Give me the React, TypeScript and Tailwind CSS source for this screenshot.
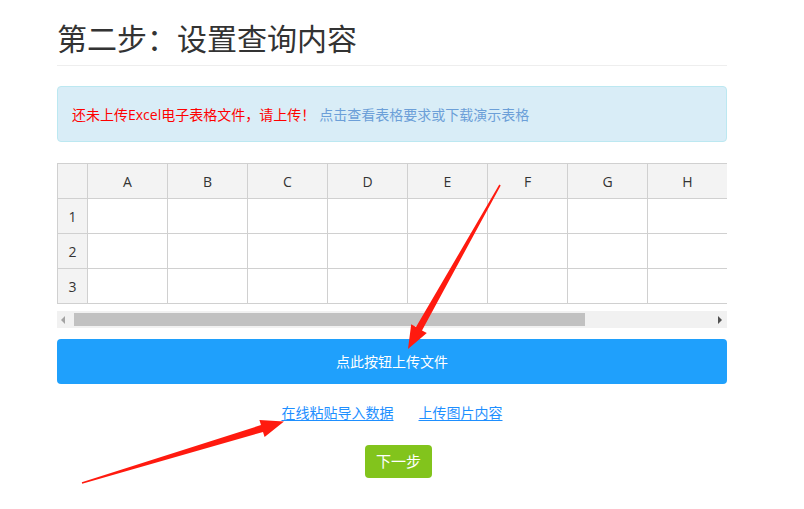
const COLS = ["A", "B", "C", "D", "E", "F", "G", "H"];
const ROWS = [1, 2, 3];

const cellBorder = "border border-[#d0d0d0]";

function Arrows() {
  return (
    <svg
      className="pointer-events-none absolute left-0 top-0"
      width={804}
      height={509}
      viewBox="0 0 804 509"
    >
      <polygon
        fill="#ff1a0f"
        points="500.7,185.4 422,330.4 426.8,333.1 408,349 411.2,324.3 416,327 499.3,184.6"
      />
      <polygon
        fill="#ff1a0f"
        points="82.2,483.7 263,431.9 264.6,437.1 284,421.5 259.4,419.9 261,425.1 81.8,482.3"
      />
    </svg>
  );
}

export default function App() {
  return (
    <div
      className="relative h-[509px] w-[804px] overflow-hidden bg-white"
      style={{ fontFamily: '"Open Sans", "Noto Sans CJK SC", sans-serif' }}
    >
      <div className="ml-[57px] w-[670px] pt-[22px]">
        <h1 className="border-b border-[#eeeeee] pb-[9px] text-[30px] leading-[34px] font-normal text-[#333]">
          第二步：设置查询内容
        </h1>

        <div className="mt-[20px] flex h-[56px] items-center rounded-[4px] border border-[#bce8f1] bg-[#d9edf7] px-[14px] text-[14px]">
          <span className="text-[#ff0000]">还未上传Excel电子表格文件，请上传！</span>
          <a className="ml-[4px] text-[#6c9fd8]">点击查看表格要求或下载演示表格</a>
        </div>

        <div className="mt-[21px] w-[670px] overflow-hidden">
          <table className="border-collapse text-[14px] text-[#333]">
            <thead>
              <tr className="h-[35px] bg-[#f3f3f3]">
                <th className={`${cellBorder} w-[30px] min-w-[30px]`} />
                {COLS.map((c) => (
                  <th key={c} className={`${cellBorder} w-[80px] min-w-[80px] font-normal`}>
                    {c}
                  </th>
                ))}
              </tr>
            </thead>
            <tbody>
              {ROWS.map((r) => (
                <tr key={r} className="h-[35px]">
                  <td className={`${cellBorder} bg-[#f3f3f3] text-center`}>{r}</td>
                  {COLS.map((c) => (
                    <td key={c} className={`${cellBorder} bg-white`} />
                  ))}
                </tr>
              ))}
            </tbody>
          </table>
        </div>

        <div className="mt-[7px] flex h-[17px] items-center bg-[#f1f1f1]">
          <span className="ml-[4px] h-0 w-0 border-y-[4px] border-r-[4px] border-y-transparent border-r-[#a3a3a3]" />
          <div className="ml-[9px] h-[13px] w-[511px] bg-[#c1c1c1]" />
          <span className="ml-auto mr-[5px] h-0 w-0 border-y-[4px] border-l-[4px] border-y-transparent border-l-[#505050]" />
        </div>

        <button className="mt-[11px] flex h-[45px] w-full items-center justify-center rounded-[4px] bg-[#1fa0fc] text-[14px] text-white">
          点此按钮上传文件
        </button>

        <div className="mt-[20px] flex justify-center gap-[25px] text-[14px] leading-[18px]">
          <a className="text-[#1e8fff] underline underline-offset-2">在线粘贴导入数据</a>
          <a className="text-[#1e8fff] underline underline-offset-2">上传图片内容</a>
        </div>

        <div className="mt-[23px] flex justify-center pl-[13px]">
          <button className="h-[33px] w-[67px] rounded-[4px] bg-[#82c41c] text-[15px] text-white">
            下一步
          </button>
        </div>
      </div>
      <Arrows />
    </div>
  );
}
